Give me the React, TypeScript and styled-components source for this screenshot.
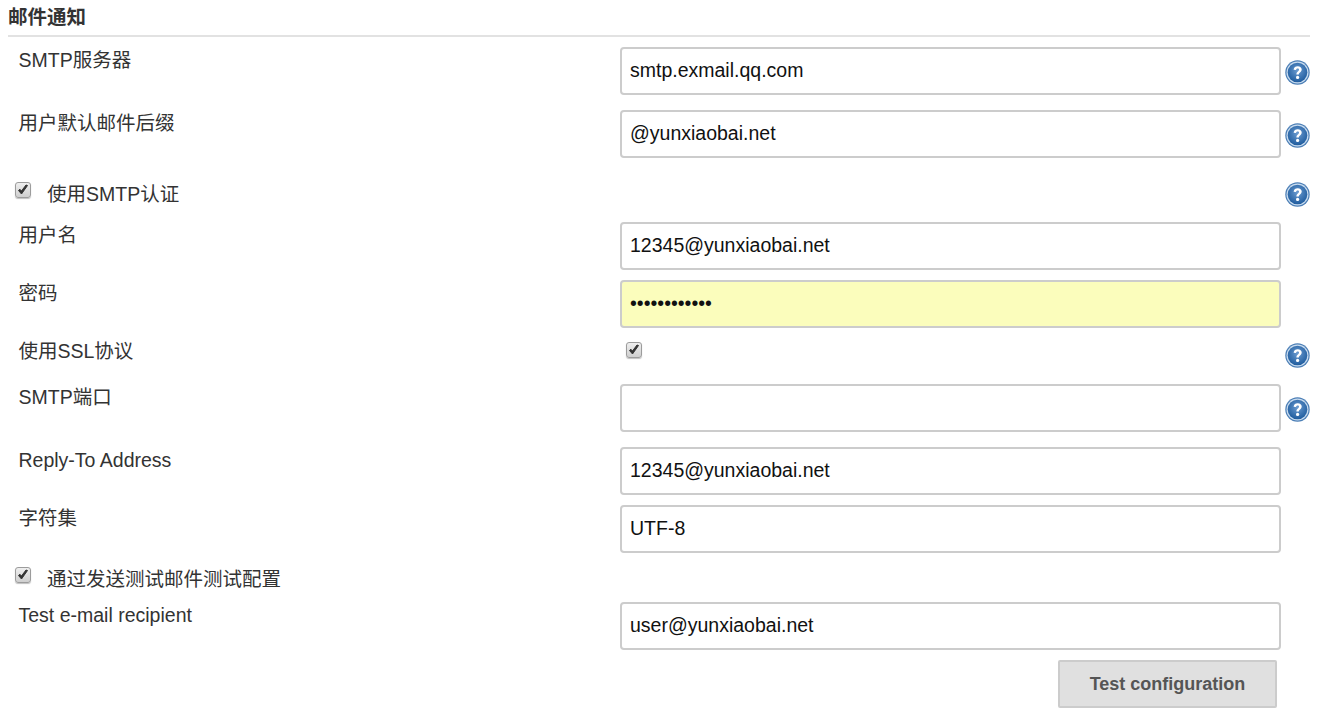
import React from "react";
import styled, { createGlobalStyle } from "styled-components";

const GlobalStyle = createGlobalStyle`
  html, body {
    margin: 0;
    padding: 0;
    background: #fff;
    overflow: hidden;
  }
  body {
    font-family: "Liberation Sans", "Noto Sans CJK SC", sans-serif;
    font-size: 19.5px;
    color: #333;
  }
`;

const Page = styled.div`
  width: 1325px;
  height: 716px;
  padding: 0 15px 0 8px;
  box-sizing: border-box;
`;

const Section = styled.h2`
  margin: 0 0 10px;
  height: 37px;
  box-sizing: border-box;
  padding-top: 5px;
  font-size: 19.5px;
  line-height: 24px;
  font-weight: bold;
  border-bottom: 2px solid #e2e2e2;
  color: #333;
`;

const Row = styled.div<{ $after: number }>`
  display: grid;
  grid-template-columns: 612px 661px 29px;
  margin-bottom: ${(p) => p.$after}px;
`;

const Label = styled.label`
  padding: 1px 0 0 10.5px;
  line-height: 24px;
`;

const TextInput = styled.input`
  width: 100%;
  height: 48px;
  box-sizing: border-box;
  padding: 0 10px 2px 8px;
  border: 2px solid #ccc;
  border-radius: 4px;
  outline: none;
  background: ${(p) => (p.type === "password" ? "#fbfdbc" : "#fff")};
  font-family: "Liberation Sans", sans-serif;
  font-size: 19.5px;
  color: #111;
`;

const HelpCell = styled.div<{ $top?: number }>`
  display: flex;
  justify-content: flex-end;
  align-items: center;
  padding-top: ${(p) => p.$top ?? 2}px;
`;

const CheckRow = styled.div<{ $height: number }>`
  display: grid;
  grid-template-columns: 1273px 29px;
  height: ${(p) => p.$height}px;
  box-sizing: border-box;
  padding-bottom: 8px;
`;

const CheckLabel = styled.div`
  display: flex;
  align-items: center;
  gap: 16px;
  padding-left: 7px;
  line-height: 24px;
`;

const Box = styled.span`
  position: relative;
  top: -4px;
  display: inline-flex;
  align-items: center;
  justify-content: center;
  width: 16px;
  height: 16px;
  box-sizing: border-box;
  border: 1px solid #9c9c9c;
  border-radius: 3px;
  background: linear-gradient(#efefef, #cfcfcf);
  box-shadow: 0 1px 1px rgba(0, 0, 0, 0.25);
`;

const SslRow = styled.div`
  display: grid;
  grid-template-columns: 612px 661px 29px;
  grid-template-rows: 34px;
  margin-bottom: 12px;
  align-items: start;
`;

const SslBoxCell = styled.div`
  display: flex;
  padding: 8px 0 0 6px;
`;

const Actions = styled.div`
  display: flex;
  justify-content: flex-end;
  padding-right: 33px;
`;

const TestButton = styled.button`
  width: 219px;
  height: 48px;
  padding: 0;
  border: 2px solid #ccc;
  border-radius: 2px;
  background: #e0e0e0;
  color: #555;
  font-family: "Liberation Sans", sans-serif;
  font-size: 18px;
  font-weight: bold;
`;

const Tick = () => (
  <Box>
    <svg width="12" height="12" viewBox="0 0 12 12">
      <path d="M1.5 6.5 L4.5 10 L10.5 1.5 L9 1 L4.5 7 L2.8 5.2 Z" fill="#333" stroke="#333" strokeWidth="1" />
    </svg>
  </Box>
);

const Help = () => (
  <svg width="25" height="25" viewBox="0 0 25 25">
    <defs>
      <radialGradient id="helpFill" cx="50%" cy="40%" r="60%">
        <stop offset="0%" stopColor="#6b9bd0" />
        <stop offset="100%" stopColor="#1f5c9e" />
      </radialGradient>
    </defs>
    <circle cx="12.5" cy="12.5" r="12.2" fill="#4c7fb6" />
    <circle cx="12.5" cy="12.5" r="11" fill="#c9dcef" />
    <circle cx="12.5" cy="12.5" r="9.8" fill="url(#helpFill)" />
    <path
      d="M8.6 9.8 C8.8 7.4 10.6 6.3 12.7 6.3 C15 6.3 16.7 7.6 16.7 9.6 C16.7 12.2 13.9 12.4 13.8 14.6 L11.4 14.6 C11.3 11.6 14 11.4 14 9.7 C14 8.9 13.5 8.4 12.6 8.4 C11.7 8.4 11.2 9 11 10 Z"
      fill="#fff"
    />
    <circle cx="12.6" cy="17.4" r="1.6" fill="#fff" />
  </svg>
);

type FieldProps = { label: string; value?: string; type?: string; help?: boolean; after: number };

const Field = ({ label, value = "", type = "text", help, after }: FieldProps) => (
  <Row $after={after}>
    <Label>{label}</Label>
    <TextInput type={type} value={value} readOnly />
    <HelpCell>{help && <Help />}</HelpCell>
  </Row>
);

export default function App() {
  return (
    <Page>
      <GlobalStyle />
      <Section>邮件通知</Section>
      <Field label="SMTP服务器" value="smtp.exmail.qq.com" help after={15} />
      <Field label="用户默认邮件后缀" value="@yunxiaobai.net" help after={15} />
      <CheckRow $height={49}>
        <CheckLabel>
          <Tick />
          <span>使用SMTP认证</span>
        </CheckLabel>
        <HelpCell>
          <Help />
        </HelpCell>
      </CheckRow>
      <Field label="用户名" value="12345@yunxiaobai.net" after={10} />
      <Field label="密码" value="123456789012" type="password" after={10} />
      <SslRow>
        <Label>使用SSL协议</Label>
        <SslBoxCell>
          <Tick />
        </SslBoxCell>
        <HelpCell $top={5}>
          <Help />
        </HelpCell>
      </SslRow>
      <Field label="SMTP端口" help after={15} />
      <Field label="Reply-To Address" value="12345@yunxiaobai.net" after={10} />
      <Field label="字符集" value="UTF-8" after={10} />
      <CheckRow $height={39}>
        <CheckLabel>
          <Tick />
          <span>通过发送测试邮件测试配置</span>
        </CheckLabel>
      </CheckRow>
      <Field label="Test e-mail recipient" value="user@yunxiaobai.net" after={10} />
      <Actions>
        <TestButton>Test configuration</TestButton>
      </Actions>
    </Page>
  );
}
